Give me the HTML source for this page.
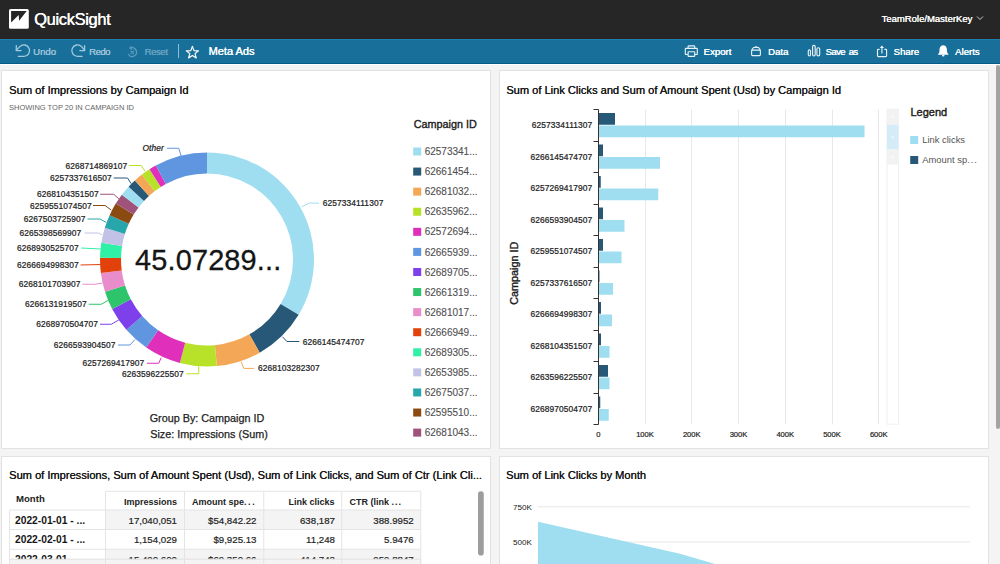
<!DOCTYPE html>
<html><head><meta charset="utf-8"><style>
*{margin:0;padding:0;box-sizing:border-box}
html,body{width:1000px;height:564px;overflow:hidden;background:#f4f4f4;font-family:"Liberation Sans", sans-serif;}
.abs{position:absolute;white-space:nowrap}
#top{position:absolute;left:0;top:0;width:1000px;height:39px;background:#262626}
#tb{position:absolute;left:0;top:39px;width:1000px;height:25px;background:#18709a;border-top:1px solid #1880b2;border-bottom:1px solid #075b8b}
#wl{position:absolute;left:0;top:64px;width:1000px;height:1px;background:#fff}
#bl{position:absolute;left:0;top:38px;width:1000px;height:1px;background:#2b211e}
.panel{position:absolute;background:#fff;border:1px solid #e2e2e2}
.tbtn{position:absolute;top:47px;font-weight:400;color:#fff;font-size:9.6px;line-height:9px;text-shadow:0.35px 0 0 currentColor}
.dis{color:#9cc4d9}
svg text{font-family:"Liberation Sans", sans-serif}
.dl{font-size:8.4px;fill:#222;stroke:#222;stroke-width:0.22px;letter-spacing:0.1px}
.lg{font-size:10px;fill:#505050;stroke:#505050;stroke-width:0.1px}
.ax{font-size:7.6px;fill:#222;stroke:#222;stroke-width:0.2px}
.title{position:absolute;font-size:11px;color:#161616;white-space:nowrap;line-height:11px;text-shadow:0.25px 0 0 #161616}
</style></head><body>
<div id="top"></div>
<svg class="abs" style="left:0;top:0" width="40" height="39"><rect x="9" y="9" width="19.8" height="19.8" rx="1.6" fill="#fff"/><path d="M11.1,11.1 L26.7,11.1 L19.1,20.7 L18.7,15 L11.1,22.4 Z" fill="#262626"/></svg>
<div class="abs" style="left:34px;top:11.4px;font-size:16.4px;line-height:16px;color:#fff;text-shadow:0.4px 0 0 #fff;letter-spacing:-0.3px">QuickSight</div>
<div class="abs" style="left:881.4px;top:14.4px;font-size:9.5px;line-height:9px;color:#fff;text-shadow:0.35px 0 0 #fff">TeamRole/MasterKey</div>
<svg class="abs" style="left:976px;top:15px" width="9" height="7"><polyline points="1,1.5 4,4.5 7,1.5" fill="none" stroke="#ccc" stroke-width="1"/></svg>
<div id="tb"></div>
<div id="wl"></div>
<div id="bl"></div>
<svg class="abs" style="left:0;top:0" width="1000" height="64">
<g fill="none" stroke="#a3c9dd" stroke-width="1.3" stroke-linecap="round" stroke-linejoin="round">
<path d="M18.4,56.4 L23.8,56.4 A5.75,5.75 0 1 0 19.75,46.6 L16.3,50.4"/>
<path d="M16.3,45.6 L16.3,50.6 L21,50.6"/>
<path d="M82,56.4 L77.6,56.4 A5.75,5.75 0 1 1 81.65,46.6 L84.6,50.4"/>
<path d="M84.6,45.6 L84.6,50.6 L79.8,50.6"/>
</g>
<g fill="none" stroke="#5d9dc0" stroke-width="1.2" stroke-linecap="round">
<path d="M131.2,47.8 A4.4,4.4 0 1 1 128.3,54.3"/>
<path d="M131.3,46.6 L129.8,48 L131.6,49.4"/>
<path d="M131,51.2 L133.6,53.6 M133.6,51.2 L131,53.6"/>
</g>
<g fill="none" stroke="#fff" stroke-width="1.2" stroke-linejoin="round" stroke-linecap="round">
<path d="M192.4,46.4 L194.0,50.6 L198.5,50.8 L195.0,53.6 L196.2,58.0 L192.4,55.5 L188.6,58.0 L189.8,53.6 L186.3,50.8 L190.8,50.6 Z"/>
</g>
<g fill="none" stroke="#e8f1f6" stroke-width="1.15" stroke-linejoin="round">
<path d="M688.1,48.4 L688.1,46.6 Q688.1,45.8 688.9,45.8 L693.9,45.8 Q694.7,45.8 694.7,46.6 L694.7,48.4"/>
<path d="M688,54.5 L685.9,54.5 Q685.3,54.5 685.3,53.9 L685.3,49 Q685.3,48.4 685.9,48.4 L696.7,48.4 Q697.3,48.4 697.3,49 L697.3,53.9 Q697.3,54.5 696.7,54.5 L694.7,54.5"/>
<rect x="688.1" y="51.7" width="6.6" height="4.7" rx="0.6"/>
<path d="M751.6,50.1 L753.6,47.5 L758.6,47.5 L760.4,50.1"/>
<rect x="751.6" y="50.1" width="8.8" height="5.5" rx="1"/>
<path d="M754.8,46.9 L757.3,46.9"/>
<rect x="808.3" y="49.9" width="2.2" height="6" rx="1.1"/>
<rect x="812.6" y="45.4" width="2.6" height="10.5" rx="1.2"/>
<rect x="816.9" y="47.7" width="2.8" height="8.2" rx="1.3"/>
<path d="M879.6,49.3 L878.3,49.3 Q877.5,49.3 877.5,50.1 L877.5,55.8 Q877.5,56.6 878.3,56.6 L885.8,56.6 Q886.6,56.6 886.6,55.8 L886.6,50.1 Q886.6,49.3 885.8,49.3 L884.4,49.3"/>
<path d="M881.9,47.6 L881.9,53.6"/>
</g>
<path d="M881.9,45.6 L884,48 L879.8,48 Z" fill="#f2f7fa"/>
<path d="M943.2,45.2 C940.3,45.4 939.6,47.8 939.5,50.5 L939.3,52.6 L937.8,54.7 L948.7,54.7 L947.2,52.6 L947,50.5 C946.9,47.8 946.2,45.4 943.2,45.2 Z" fill="#fff"/>
<rect x="942" y="54.4" width="2.5" height="2.1" rx="1" fill="#f4f4f4"/>
</svg>
<div class="tbtn dis" style="left:33px">Undo</div>
<div class="tbtn dis" style="left:89px;letter-spacing:-0.55px">Redo</div>
<div class="tbtn" style="left:144.4px;color:#6aa3c2;letter-spacing:-0.4px">Reset</div>
<div class="abs" style="left:178px;top:44px;width:1px;height:14px;background:#8fbdd4"></div>
<div class="tbtn" style="left:208.4px;top:46px;font-size:11px;line-height:10.5px;text-shadow:0.4px 0 0 #fff">Meta Ads</div>
<div class="tbtn" style="left:703.5px">Export</div>
<div class="tbtn" style="left:768px">Data</div>
<div class="tbtn" style="left:825.5px;letter-spacing:-0.65px;word-spacing:1.8px">Save as</div>
<div class="tbtn" style="left:893.5px">Share</div>
<div class="tbtn" style="left:955px">Alerts</div>

<div class="panel" style="left:1px;top:70px;width:490px;height:379px"></div>
<div class="panel" style="left:498.5px;top:70px;width:490px;height:379px"></div>
<div class="panel" style="left:1px;top:456px;width:490px;height:120px"></div>
<div class="panel" style="left:498.5px;top:456px;width:490px;height:120px"></div>
<div class="abs" style="left:995.5px;top:64.5px;width:4.5px;height:364.5px;background:#a4a4a4;border-radius:2.2px"></div>

<div class="title" style="left:9px;top:85px;font-size:11.15px">Sum of Impressions by Campaign Id</div>
<div class="abs" style="left:9px;top:103.7px;font-size:7.5px;line-height:7.5px;color:#666">SHOWING TOP 20 IN CAMPAIGN ID</div>
<div class="title" style="left:506.2px;top:84.8px;font-size:11.1px">Sum of Link Clicks and Sum of Amount Spent (Usd) by Campaign Id</div>
<div class="title" style="left:9px;top:470px;font-size:11.1px">Sum of Impressions, Sum of Amount Spent (Usd), Sum of Link Clicks, and Sum of Ctr (Link Cli...</div>
<div class="title" style="left:506px;top:470px;font-size:11.1px">Sum of Link Clicks by Month</div>

<svg class="abs" style="left:0;top:0" width="1000" height="564">
<path d="M207.00,152.50 A107,107 0 0 1 298.62,314.77 L280.64,303.92 A86,86 0 0 0 207.00,173.50 Z" fill="#9fdef0"/>
<path d="M298.62,314.77 A107,107 0 0 1 259.69,352.63 L249.35,334.35 A86,86 0 0 0 280.64,303.92 Z" fill="#285877"/>
<path d="M259.69,352.63 A107,107 0 0 1 216.88,366.04 L214.94,345.13 A86,86 0 0 0 249.35,334.35 Z" fill="#f5a758"/>
<path d="M216.88,366.04 A107,107 0 0 1 179.85,363.00 L185.18,342.69 A86,86 0 0 0 214.94,345.13 Z" fill="#b8e22a"/>
<path d="M179.85,363.00 A107,107 0 0 1 146.24,347.58 L158.17,330.29 A86,86 0 0 0 185.18,342.69 Z" fill="#e030bb"/>
<path d="M146.24,347.58 A107,107 0 0 1 126.37,329.84 L142.19,316.03 A86,86 0 0 0 158.17,330.29 Z" fill="#6096e0"/>
<path d="M126.37,329.84 A107,107 0 0 1 112.18,309.07 L130.79,299.34 A86,86 0 0 0 142.19,316.03 Z" fill="#7e40ea"/>
<path d="M112.18,309.07 A107,107 0 0 1 105.01,291.85 L125.03,285.50 A86,86 0 0 0 130.79,299.34 Z" fill="#2ec46c"/>
<path d="M105.01,291.85 A107,107 0 0 1 100.87,273.10 L121.70,270.43 A86,86 0 0 0 125.03,285.50 Z" fill="#e88ccb"/>
<path d="M100.87,273.10 A107,107 0 0 1 100.02,257.63 L121.01,258.00 A86,86 0 0 0 121.70,270.43 Z" fill="#e2410c"/>
<path d="M100.02,257.63 A107,107 0 0 1 101.32,242.76 L122.06,246.05 A86,86 0 0 0 121.01,258.00 Z" fill="#2ef0a6"/>
<path d="M101.32,242.76 A107,107 0 0 1 104.84,227.68 L124.89,233.93 A86,86 0 0 0 122.06,246.05 Z" fill="#c2c2e6"/>
<path d="M104.84,227.68 A107,107 0 0 1 109.63,215.13 L128.74,223.84 A86,86 0 0 0 124.89,233.93 Z" fill="#27a6ab"/>
<path d="M109.63,215.13 A107,107 0 0 1 115.77,203.59 L133.67,214.57 A86,86 0 0 0 128.74,223.84 Z" fill="#8a4a12"/>
<path d="M115.77,203.59 A107,107 0 0 1 121.88,194.66 L138.59,207.38 A86,86 0 0 0 133.67,214.57 Z" fill="#a0537a"/>
<path d="M121.88,194.66 A107,107 0 0 1 128.62,186.66 L144.00,200.96 A86,86 0 0 0 138.59,207.38 Z" fill="#9fdef0"/>
<path d="M128.62,186.66 A107,107 0 0 1 134.85,180.49 L149.01,195.99 A86,86 0 0 0 144.00,200.96 Z" fill="#285877"/>
<path d="M134.85,180.49 A107,107 0 0 1 141.86,174.61 L154.65,191.27 A86,86 0 0 0 149.01,195.99 Z" fill="#f5a758"/>
<path d="M141.86,174.61 A107,107 0 0 1 149.51,169.26 L160.79,186.97 A86,86 0 0 0 154.65,191.27 Z" fill="#b8e22a"/>
<path d="M149.51,169.26 A107,107 0 0 1 155.78,165.56 L165.83,183.99 A86,86 0 0 0 160.79,186.97 Z" fill="#e030bb"/>
<path d="M155.78,165.56 A107,107 0 0 1 207.00,152.50 L207.00,173.50 A86,86 0 0 0 165.83,183.99 Z" fill="#6096e0"/>
<text x="322.8" y="206.10" class="dl">6257334111307</text>
<polyline points="301.7,206.8 309.2,203.1 319.1,203.1" fill="none" stroke="#9fdef0" stroke-width="1"/>
<text x="302.7" y="344.50" class="dl">6266145474707</text>
<polyline points="282.5,336.8 286.9,341.5 299.3,341.5" fill="none" stroke="#285877" stroke-width="1"/>
<text x="257.9" y="371.40" class="dl">6268103282307</text>
<polyline points="241.1,361.7 243.8,368.4 253.9,368.4" fill="none" stroke="#f5a758" stroke-width="1"/>
<text x="122.0" y="376.75" class="dl">6263596225507</text>
<polyline points="198.75,366.25 198.75,373.75 186.25,373.75" fill="none" stroke="#b8e22a" stroke-width="1"/>
<text x="82.5" y="366.25" class="dl">6257269417907</text>
<polyline points="161.25,357.5 158.75,363.25 147,363.25" fill="none" stroke="#e030bb" stroke-width="1"/>
<text x="53.75" y="348.00" class="dl">6266593904507</text>
<polyline points="135,339.5 130,345 118,345" fill="none" stroke="#6096e0" stroke-width="1"/>
<text x="36.25" y="327.25" class="dl">6268970504707</text>
<polyline points="118.75,320 111.25,324.25 100,324.25" fill="none" stroke="#7e40ea" stroke-width="1"/>
<text x="25.0" y="307.25" class="dl">6266131919507</text>
<polyline points="108.75,300 101.25,304.25 88.75,304.25" fill="none" stroke="#2ec46c" stroke-width="1"/>
<text x="18.75" y="287.25" class="dl">6268101703907</text>
<polyline points="102.5,283 95,284.25 82.5,284.25" fill="none" stroke="#e88ccb" stroke-width="1"/>
<text x="17.0" y="268.00" class="dl">6266694998307</text>
<polyline points="100.5,264.5 80.5,265" fill="none" stroke="#e2410c" stroke-width="1"/>
<text x="17.0" y="251.00" class="dl">6268930525707</text>
<polyline points="100.5,249 81.25,248" fill="none" stroke="#2ef0a6" stroke-width="1"/>
<text x="19.5" y="236.00" class="dl">6265398569907</text>
<polyline points="102,235 98.75,233 84.5,233" fill="none" stroke="#c2c2e6" stroke-width="1"/>
<text x="23.75" y="222.00" class="dl">6267503725907</text>
<polyline points="106.25,222.5 100,219 87.5,219" fill="none" stroke="#27a6ab" stroke-width="1"/>
<text x="30.0" y="208.50" class="dl">6259551074507</text>
<polyline points="111.25,210 105,205.5 93,205.5" fill="none" stroke="#8a4a12" stroke-width="1"/>
<text x="37.0" y="197.25" class="dl">6268104351507</text>
<polyline points="118.75,198.75 113.75,194.25 100,194.25" fill="none" stroke="#a0537a" stroke-width="1"/>
<text x="50.0" y="181.00" class="dl">6257337616507</text>
<polyline points="131.25,183.75 127.5,178 113.75,178" fill="none" stroke="#285877" stroke-width="1"/>
<text x="65.5" y="168.50" class="dl">6268714869107</text>
<polyline points="145,171.25 141.25,165.5 128.75,165.5" fill="none" stroke="#b8e22a" stroke-width="1"/>
<text x="142.5" y="151" class="dl" font-style="italic">Other</text>
<polyline points="181.25,156.25 178.75,148.25 167,148.25" fill="none" stroke="#6096e0" stroke-width="1"/>
<text x="135.1" y="270.1" font-size="28.9" fill="#151515" stroke="#151515" stroke-width="0.3" letter-spacing="0.15">45.07289...</text>
<text x="207" y="421.9" font-size="10.8" fill="#222" stroke="#222" stroke-width="0.25" text-anchor="middle">Group By: Campaign ID</text>
<text x="209" y="437.6" font-size="10.8" fill="#222" stroke="#222" stroke-width="0.25" text-anchor="middle">Size: Impressions (Sum)</text>
<text x="413.7" y="127.6" font-size="10.8" fill="#1a1a1a" stroke="#1a1a1a" stroke-width="0.35">Campaign ID</text>
<rect x="413.2" y="147.50" width="8" height="8" fill="#9fdef0"/>
<text x="424.7" y="155.10" class="lg">62573341...</text>
<rect x="413.2" y="167.58" width="8" height="8" fill="#285877"/>
<text x="424.7" y="175.18" class="lg">62661454...</text>
<rect x="413.2" y="187.66" width="8" height="8" fill="#f5a758"/>
<text x="424.7" y="195.26" class="lg">62681032...</text>
<rect x="413.2" y="207.74" width="8" height="8" fill="#b8e22a"/>
<text x="424.7" y="215.34" class="lg">62635962...</text>
<rect x="413.2" y="227.82" width="8" height="8" fill="#e030bb"/>
<text x="424.7" y="235.42" class="lg">62572694...</text>
<rect x="413.2" y="247.90" width="8" height="8" fill="#6096e0"/>
<text x="424.7" y="255.50" class="lg">62665939...</text>
<rect x="413.2" y="267.98" width="8" height="8" fill="#7e40ea"/>
<text x="424.7" y="275.58" class="lg">62689705...</text>
<rect x="413.2" y="288.06" width="8" height="8" fill="#2ec46c"/>
<text x="424.7" y="295.66" class="lg">62661319...</text>
<rect x="413.2" y="308.14" width="8" height="8" fill="#e88ccb"/>
<text x="424.7" y="315.74" class="lg">62681017...</text>
<rect x="413.2" y="328.22" width="8" height="8" fill="#e2410c"/>
<text x="424.7" y="335.82" class="lg">62666949...</text>
<rect x="413.2" y="348.30" width="8" height="8" fill="#2ef0a6"/>
<text x="424.7" y="355.90" class="lg">62689305...</text>
<rect x="413.2" y="368.38" width="8" height="8" fill="#c2c2e6"/>
<text x="424.7" y="375.98" class="lg">62653985...</text>
<rect x="413.2" y="388.46" width="8" height="8" fill="#27a6ab"/>
<text x="424.7" y="396.06" class="lg">62675037...</text>
<rect x="413.2" y="408.54" width="8" height="8" fill="#8a4a12"/>
<text x="424.7" y="416.14" class="lg">62595510...</text>
<rect x="413.2" y="428.62" width="8" height="8" fill="#a0537a"/>
<text x="424.7" y="436.22" class="lg">62681043...</text>
<text x="598.25" y="436.5" class="ax" text-anchor="middle">0</text>
<line x1="645.50" y1="109.5" x2="645.50" y2="424.5" stroke="#e8e8e8" stroke-width="1"/>
<text x="645.00" y="436.5" class="ax" text-anchor="middle">100K</text>
<line x1="691.50" y1="109.5" x2="691.50" y2="424.5" stroke="#e8e8e8" stroke-width="1"/>
<text x="691.75" y="436.5" class="ax" text-anchor="middle">200K</text>
<line x1="738.50" y1="109.5" x2="738.50" y2="424.5" stroke="#e8e8e8" stroke-width="1"/>
<text x="738.50" y="436.5" class="ax" text-anchor="middle">300K</text>
<line x1="785.50" y1="109.5" x2="785.50" y2="424.5" stroke="#e8e8e8" stroke-width="1"/>
<text x="785.25" y="436.5" class="ax" text-anchor="middle">400K</text>
<line x1="832.50" y1="109.5" x2="832.50" y2="424.5" stroke="#e8e8e8" stroke-width="1"/>
<text x="832.00" y="436.5" class="ax" text-anchor="middle">500K</text>
<line x1="878.50" y1="109.5" x2="878.50" y2="424.5" stroke="#e8e8e8" stroke-width="1"/>
<text x="878.75" y="436.5" class="ax" text-anchor="middle">600K</text>
<rect x="598.25" y="113.00" width="16.75" height="11.75" fill="#285877"/>
<rect x="598.25" y="125.50" width="266.25" height="11.75" fill="#9fdef0"/>
<text x="592.3" y="128.25" class="dl" letter-spacing="0.12" text-anchor="end">6257334111307</text>
<line x1="593.5" y1="109.50" x2="598.5" y2="109.50" stroke="#333" stroke-width="1"/>
<rect x="598.25" y="144.50" width="4.75" height="11.75" fill="#285877"/>
<rect x="598.25" y="157.00" width="61.75" height="11.75" fill="#9fdef0"/>
<text x="592.3" y="159.75" class="dl" letter-spacing="0.12" text-anchor="end">6266145474707</text>
<line x1="593.5" y1="141.50" x2="598.5" y2="141.50" stroke="#333" stroke-width="1"/>
<rect x="598.25" y="176.00" width="2.5" height="11.75" fill="#285877"/>
<rect x="598.25" y="188.50" width="60.0" height="11.75" fill="#9fdef0"/>
<text x="592.3" y="191.25" class="dl" letter-spacing="0.12" text-anchor="end">6257269417907</text>
<line x1="593.5" y1="172.50" x2="598.5" y2="172.50" stroke="#333" stroke-width="1"/>
<rect x="598.25" y="207.50" width="4.75" height="11.75" fill="#285877"/>
<rect x="598.25" y="220.00" width="26.25" height="11.75" fill="#9fdef0"/>
<text x="592.3" y="222.75" class="dl" letter-spacing="0.12" text-anchor="end">6266593904507</text>
<line x1="593.5" y1="204.50" x2="598.5" y2="204.50" stroke="#333" stroke-width="1"/>
<rect x="598.25" y="239.00" width="4.75" height="11.75" fill="#285877"/>
<rect x="598.25" y="251.50" width="23.25" height="11.75" fill="#9fdef0"/>
<text x="592.3" y="254.25" class="dl" letter-spacing="0.12" text-anchor="end">6259551074507</text>
<line x1="593.5" y1="235.50" x2="598.5" y2="235.50" stroke="#333" stroke-width="1"/>
<rect x="598.25" y="270.50" width="1.25" height="11.75" fill="#285877"/>
<rect x="598.25" y="283.00" width="14.75" height="11.75" fill="#9fdef0"/>
<text x="592.3" y="285.75" class="dl" letter-spacing="0.12" text-anchor="end">6257337616507</text>
<line x1="593.5" y1="267.50" x2="598.5" y2="267.50" stroke="#333" stroke-width="1"/>
<rect x="598.25" y="302.00" width="2.75" height="11.75" fill="#285877"/>
<rect x="598.25" y="314.50" width="13.75" height="11.75" fill="#9fdef0"/>
<text x="592.3" y="317.25" class="dl" letter-spacing="0.12" text-anchor="end">6266694998307</text>
<line x1="593.5" y1="298.50" x2="598.5" y2="298.50" stroke="#333" stroke-width="1"/>
<rect x="598.25" y="333.50" width="2.75" height="11.75" fill="#285877"/>
<rect x="598.25" y="346.00" width="11.25" height="11.75" fill="#9fdef0"/>
<text x="592.3" y="348.75" class="dl" letter-spacing="0.12" text-anchor="end">6268104351507</text>
<line x1="593.5" y1="330.50" x2="598.5" y2="330.50" stroke="#333" stroke-width="1"/>
<rect x="598.25" y="365.00" width="9.75" height="11.75" fill="#285877"/>
<rect x="598.25" y="377.50" width="11.25" height="11.75" fill="#9fdef0"/>
<text x="592.3" y="380.25" class="dl" letter-spacing="0.12" text-anchor="end">6263596225507</text>
<line x1="593.5" y1="361.50" x2="598.5" y2="361.50" stroke="#333" stroke-width="1"/>
<rect x="598.25" y="396.50" width="2.0" height="11.75" fill="#285877"/>
<rect x="598.25" y="409.00" width="10.5" height="11.75" fill="#9fdef0"/>
<text x="592.3" y="411.75" class="dl" letter-spacing="0.12" text-anchor="end">6268970504707</text>
<line x1="593.5" y1="393.50" x2="598.5" y2="393.50" stroke="#333" stroke-width="1"/>
<line x1="593.5" y1="424.5" x2="598.5" y2="424.5" stroke="#333" stroke-width="1"/>
<line x1="598.5" y1="109.5" x2="598.5" y2="424.5" stroke="#333" stroke-width="1"/>
<text transform="translate(517.8,273.2) rotate(-90)" font-size="10.8" fill="#1a1a1a" stroke="#1a1a1a" stroke-width="0.35" text-anchor="middle">Campaign ID</text>
<rect x="887" y="109.2" width="11.4" height="315" fill="none" stroke="#f0f0f0" stroke-width="1"/>
<rect x="887" y="109.2" width="11.4" height="15.6" fill="#f2f2f2"/>
<rect x="887" y="124.8" width="11.4" height="24.8" fill="#d4ecf7"/>
<rect x="887" y="149.6" width="11.4" height="14.9" fill="#f2f2f2"/>
<g stroke="#fff" stroke-width="0.6"><line x1="891.5" y1="116.3" x2="894" y2="116.3"/><line x1="891.5" y1="117.8" x2="894" y2="117.8"/><line x1="891.5" y1="136.3" x2="894" y2="136.3"/><line x1="891.5" y1="138" x2="894" y2="138"/><line x1="891.5" y1="156.5" x2="894" y2="156.5"/><line x1="891.5" y1="158" x2="894" y2="158"/></g>
<text x="910.5" y="116.1" font-size="11" fill="#1a1a1a" stroke="#1a1a1a" stroke-width="0.4">Legend</text>
<rect x="910.2" y="136" width="8" height="8" fill="#9fdef0"/>
<text x="922.3" y="143.4" font-size="9.4" fill="#555">Link clicks</text>
<rect x="910.2" y="156" width="8" height="8" fill="#285877"/>
<text x="922.3" y="163.4" font-size="9.4" fill="#555">Amount sp<tspan letter-spacing="0.9">...</tspan></text>
<defs><clipPath id="tc"><rect x="0" y="480" width="480" height="84"/></clipPath></defs><g clip-path="url(#tc)"><rect x="105.5" y="510" width="315.25" height="19.5" fill="#f4f4f4"/>
<rect x="105.5" y="529.5" width="315.25" height="19.75" fill="#ffffff"/>
<rect x="105.5" y="549.25" width="315.25" height="10.0" fill="#f4f4f4"/>
<rect x="105.5" y="559.25" width="315.25" height="20.75" fill="#f4f4f4"/>
<line x1="105.5" y1="491.25" x2="420.75" y2="491.25" stroke="#e4e4e4" stroke-width="1"/>
<line x1="9.6" y1="510" x2="420.75" y2="510" stroke="#e4e4e4" stroke-width="1"/>
<line x1="9.6" y1="529.5" x2="420.75" y2="529.5" stroke="#e4e4e4" stroke-width="1"/>
<line x1="9.6" y1="549.25" x2="420.75" y2="549.25" stroke="#e4e4e4" stroke-width="1"/>
<line x1="9.6" y1="559.25" x2="420.75" y2="559.25" stroke="#e4e4e4" stroke-width="1"/>
<line x1="9.6" y1="510" x2="9.6" y2="564" stroke="#e4e4e4" stroke-width="1"/>
<line x1="105.5" y1="491.25" x2="105.5" y2="564" stroke="#e4e4e4" stroke-width="1"/>
<line x1="184.5" y1="491.25" x2="184.5" y2="564" stroke="#e4e4e4" stroke-width="1"/>
<line x1="263.75" y1="491.25" x2="263.75" y2="564" stroke="#e4e4e4" stroke-width="1"/>
<line x1="341.75" y1="491.25" x2="341.75" y2="564" stroke="#e4e4e4" stroke-width="1"/>
<line x1="420.75" y1="491.25" x2="420.75" y2="564" stroke="#e4e4e4" stroke-width="1"/>
<text x="16" y="502.4" font-size="9.6" font-weight="700" fill="#222" text-anchor="start">Month</text>
<text x="177" y="504.5" font-size="9.0" font-weight="700" fill="#222" text-anchor="end">Impressions</text>
<text x="192" y="504.5" font-size="9.0" font-weight="700" fill="#222" text-anchor="start">Amount spe<tspan letter-spacing="1.6">...</tspan></text>
<text x="334.5" y="504.5" font-size="9.0" font-weight="700" fill="#222" text-anchor="end">Link clicks</text>
<text x="349.5" y="504.5" font-size="9.0" font-weight="700" fill="#222" text-anchor="start">CTR (link <tspan letter-spacing="1">...</tspan></text>
<text x="15" y="523.6" font-size="10.25" font-weight="700" fill="#161616">2022-01-01 - ...</text>
<text x="177" y="523.6" font-size="9.7" fill="#1e1e1e" stroke="#1e1e1e" stroke-width="0.2" text-anchor="end">17,040,051</text>
<text x="256.5" y="523.6" font-size="9.7" fill="#1e1e1e" stroke="#1e1e1e" stroke-width="0.2" text-anchor="end">$54,842.22</text>
<text x="335" y="523.6" font-size="9.7" fill="#1e1e1e" stroke="#1e1e1e" stroke-width="0.2" text-anchor="end">638,187</text>
<text x="413.75" y="523.6" font-size="9.7" fill="#1e1e1e" stroke="#1e1e1e" stroke-width="0.2" text-anchor="end">388.9952</text>
<text x="15" y="543.1" font-size="10.25" font-weight="700" fill="#161616">2022-02-01 - ...</text>
<text x="177" y="543.1" font-size="9.7" fill="#1e1e1e" stroke="#1e1e1e" stroke-width="0.2" text-anchor="end">1,154,029</text>
<text x="256.5" y="543.1" font-size="9.7" fill="#1e1e1e" stroke="#1e1e1e" stroke-width="0.2" text-anchor="end">$9,925.13</text>
<text x="335" y="543.1" font-size="9.7" fill="#1e1e1e" stroke="#1e1e1e" stroke-width="0.2" text-anchor="end">11,248</text>
<text x="413.75" y="543.1" font-size="9.7" fill="#1e1e1e" stroke="#1e1e1e" stroke-width="0.2" text-anchor="end">5.9476</text>
<text x="15" y="562.85" font-size="10.25" font-weight="700" fill="#161616">2022-03-01 - ...</text>
<text x="177" y="562.85" font-size="9.7" fill="#1e1e1e" stroke="#1e1e1e" stroke-width="0.2" text-anchor="end">15,490,600</text>
<text x="256.5" y="562.85" font-size="9.7" fill="#1e1e1e" stroke="#1e1e1e" stroke-width="0.2" text-anchor="end">$69,350.66</text>
<text x="335" y="562.85" font-size="9.7" fill="#1e1e1e" stroke="#1e1e1e" stroke-width="0.2" text-anchor="end">414,742</text>
<text x="413.75" y="562.85" font-size="9.7" fill="#1e1e1e" stroke="#1e1e1e" stroke-width="0.2" text-anchor="end">959.8847</text>
<rect x="9.6" y="559.25" width="411.15" height="20.75" fill="#f4f4f4"/>
<line x1="9.6" y1="559.25" x2="420.75" y2="559.25" stroke="#e4e4e4" stroke-width="1"/>
<line x1="9.6" y1="559.25" x2="9.6" y2="564" stroke="#e4e4e4" stroke-width="1"/>
<line x1="105.5" y1="559.25" x2="105.5" y2="564" stroke="#e4e4e4" stroke-width="1"/>
<line x1="184.5" y1="559.25" x2="184.5" y2="564" stroke="#e4e4e4" stroke-width="1"/>
<line x1="263.75" y1="559.25" x2="263.75" y2="564" stroke="#e4e4e4" stroke-width="1"/>
<line x1="341.75" y1="559.25" x2="341.75" y2="564" stroke="#e4e4e4" stroke-width="1"/>
<line x1="420.75" y1="559.25" x2="420.75" y2="564" stroke="#e4e4e4" stroke-width="1"/></g>
<rect x="478" y="491.25" width="5.75" height="64.25" rx="2.8" fill="#9d9d9d"/>
<text x="532" y="509.5" font-size="8.1" fill="#222" text-anchor="end">750K</text>
<text x="532" y="544.8" font-size="8.1" fill="#222" text-anchor="end">500K</text>
<line x1="538" y1="506.75" x2="970" y2="506.75" stroke="#e6e6e6" stroke-width="1"/>
<line x1="538" y1="542" x2="970" y2="542" stroke="#e6e6e6" stroke-width="1"/>
<path d="M538,521.75 L680,553.75 L722,566 L538,566 Z" fill="#9fdef0"/>
</svg>
</body></html>
